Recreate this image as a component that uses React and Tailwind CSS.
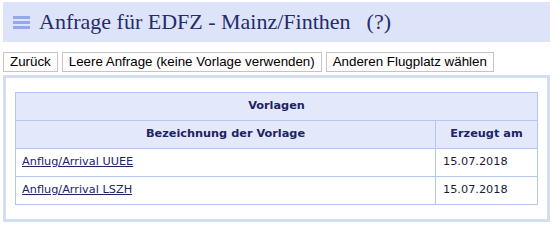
import React from "react";

const rows = [
  { name: "Anflug/Arrival UUEE", date: "15.07.2018" },
  { name: "Anflug/Arrival LSZH", date: "15.07.2018" },
];

const buttons = ["Zurück", "Leere Anfrage (keine Vorlage verwenden)", "Anderen Flugplatz wählen"];

export default function App() {
  return (
    <div className="w-[556px] h-[225px] bg-white pt-[2px] pl-[3px] pr-[6px]">
      {/* Header */}
      <div className="flex items-center h-[40px] bg-[#dde4f9] pl-[10px]">
        <svg width="17" height="13" viewBox="0 0 17 13" className="mr-[9px]">
          <rect x="0" y="0" width="17" height="3" fill="#94a8ea" />
          <rect x="0" y="5" width="17" height="3" fill="#94a8ea" />
          <rect x="0" y="10" width="17" height="3" fill="#94a8ea" />
        </svg>
        <h1 className="text-[22px] text-[#252c68] font-['Liberation_Serif',serif] leading-none">
          Anfrage für EDFZ - Mainz/Finthen<span className="ml-[16px]">(?)</span>
        </h1>
      </div>

      {/* Buttons */}
      <div className="flex gap-[4px] mt-[10px] font-['Liberation_Sans',Arial,sans-serif] text-[13.33px] text-black">
        {buttons.map((b) => (
          <button
            key={b}
            className="h-[20px] px-[6px] border border-[#c4c4c4] bg-[#fffdfd] leading-none"
          >
            {b}
          </button>
        ))}
      </div>

      {/* Vorlagen panel */}
      <div className="mt-[3px] h-[147px] border-[3px] border-[#d3ddf6] pt-[14px] px-[9px]">
        <table className="w-full border-collapse font-['DejaVu_Sans',Verdana,sans-serif] text-[11.3px]">
          <thead>
            <tr className="h-[28px] bg-[#e3e9fa]">
              <th colSpan={2} className="border border-[#b4c6f0] font-bold text-[#1d2363]">
                Vorlagen
              </th>
            </tr>
            <tr className="h-[28px] bg-[#e3e9fa]">
              <th className="border border-[#b4c6f0] font-bold text-[#1d2363]">
                Bezeichnung der Vorlage
              </th>
              <th className="w-[102px] border border-[#b4c6f0] font-bold text-[#1d2363]">
                Erzeugt am
              </th>
            </tr>
          </thead>
          <tbody>
            {rows.map((r) => (
              <tr key={r.name} className="h-[28px]">
                <td className="border border-[#b4c6f0] px-[6px]">
                  <a href="#" className="text-[#1d2363] underline">
                    {r.name}
                  </a>
                </td>
                <td className="border border-[#b4c6f0] pl-[7px] text-[#1a1a40]">{r.date}</td>
              </tr>
            ))}
          </tbody>
        </table>
      </div>
    </div>
  );
}
